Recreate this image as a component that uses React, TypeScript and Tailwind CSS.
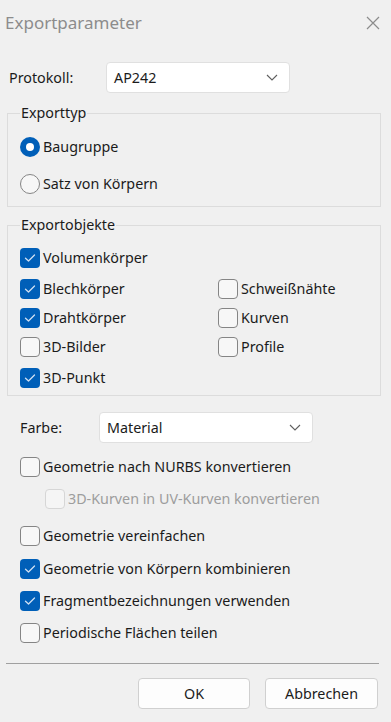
import React from 'react'

const font = { fontFamily: '"Noto Sans", "Open Sans", sans-serif' }

const Check = ({ checked, disabled }: { checked?: boolean; disabled?: boolean }) => (
  checked ? (
    <span className='flex items-center justify-center w-[20px] h-[20px] rounded-[4px] bg-[#005fb8] shrink-0'>
      <svg width='12' height='10' viewBox='0 0 12 10' fill='none'>
        <path d='M1.5 5.2 L4.5 8 L10.5 2' stroke='#cfe0f3' strokeWidth='1.3' strokeLinecap='round' strokeLinejoin='round' />
      </svg>
    </span>
  ) : (
    <span className={disabled
      ? 'w-[20px] h-[20px] rounded-[4px] border border-[#d6d6d6] bg-[#f5f5f5] shrink-0'
      : 'w-[20px] h-[20px] rounded-[4px] border border-[#858585] bg-[#f7f7f7] shrink-0'} />
  )
)

const Row = ({ label, checked, disabled, className }: { label: string; checked?: boolean; disabled?: boolean; className?: string }) => (
  <div className={'flex items-center gap-[3px] ' + (className ?? '')}>
    <Check checked={checked} disabled={disabled} />
    <span className={disabled ? 'text-[#9d9d9d]' : 'text-[#1b1b1b]'}>{label}</span>
  </div>
)

const Radio = ({ label, checked }: { label: string; checked?: boolean }) => (
  <div className='flex items-center gap-[3px] h-[26px]'>
    {checked ? (
      <span className='flex items-center justify-center w-[20px] h-[20px] rounded-full bg-[#005fb8]'>
        <span className='w-[8px] h-[8px] rounded-full bg-white' />
      </span>
    ) : (
      <span className='w-[20px] h-[20px] rounded-full border border-[#858585] bg-[#f7f7f7]' />
    )}
    <span className='text-[#1b1b1b]'>{label}</span>
  </div>
)

const Chevron = () => (
  <svg width='12' height='7' viewBox='0 0 12 7' fill='none'>
    <path d='M1 1 L6 6 L11 1' stroke='#5f5f5f' strokeWidth='1.1' />
  </svg>
)

const Select = ({ value, className }: { value: string; className: string }) => (
  <div className={'flex items-center justify-between h-[31px] bg-white border border-[#e0e0e0] rounded-[4px] pl-[7px] pr-[11px] ' + className}>
    <span className='text-[#1b1b1b]'>{value}</span>
    <Chevron />
  </div>
)

export default function App() {
  return (
    <div style={font} className='w-[391px] h-[722px] bg-[#f0f0f0] flex flex-col text-[14.3px] leading-[20px] overflow-hidden'>
      <div className='h-[45px] flex items-center justify-between pl-[5px] pr-[10px]'>
        <span className='text-[17px] text-[#8c8c8c]'>Exportparameter</span>
        <svg width='16' height='16' viewBox='0 0 16 16' fill='none'>
          <path d='M2 2 L14 14 M14 2 L2 14' stroke='#8c8c8c' strokeWidth='1.2' />
        </svg>
      </div>

      <div className='flex items-center mt-[17px] pl-[9px]'>
        <span className='w-[97px] text-[#1b1b1b]'>Protokoll:</span>
        <Select value='AP242' className='w-[184px]' />
      </div>

      <fieldset className='ml-[7px] w-[374px] mt-[10px] border border-[#dcdcdc] px-[12px] pb-[9px] h-[104px]'>
        <legend className='px-[1px] text-[#1b1b1b]'>Exporttyp</legend>
        <div className='flex flex-col gap-[11px] mt-[11px]'>
          <Radio label='Baugruppe' checked />
          <Radio label='Satz von Körpern' />
        </div>
      </fieldset>

      <fieldset className='ml-[7px] w-[374px] mt-[8px] border border-[#dcdcdc] px-[12px] h-[181px]'>
        <legend className='px-[1px] text-[#1b1b1b]'>Exportobjekte</legend>
        <div className='flex flex-col mt-[10px]'>
          <Row label='Volumenkörper' checked className='h-[26px]' />
          <div className='grid grid-cols-[198px_1fr] mt-[5px] gap-y-[3px]'>
            <Row label='Blechkörper' checked className='h-[26px]' />
            <Row label='Schweißnähte' className='h-[26px]' />
            <Row label='Drahtkörper' checked className='h-[26px]' />
            <Row label='Kurven' className='h-[26px]' />
            <Row label='3D-Bilder' className='h-[26px]' />
            <Row label='Profile' className='h-[26px]' />
          </div>
          <Row label='3D-Punkt' checked className='h-[26px] mt-[5px]' />
        </div>
      </fieldset>

      <div className='flex items-center mt-[16px] pl-[20px]'>
        <span className='w-[79px] text-[#1b1b1b]'>Farbe:</span>
        <Select value='Material' className='w-[214px]' />
      </div>

      <div className='flex flex-col pl-[20px]'>
        <Row label='Geometrie nach NURBS konvertieren' className='h-[26px] mt-[11px]' />
        <Row label='3D-Kurven in UV-Kurven konvertieren' disabled className='h-[26px] mt-[6px] ml-[25px]' />
        <Row label='Geometrie vereinfachen' className='h-[26px] mt-[11px]' />
        <Row label='Geometrie von Körpern kombinieren' checked className='h-[26px] mt-[7px]' />
        <Row label='Fragmentbezeichnungen verwenden' checked className='h-[26px] mt-[6px]' />
        <Row label='Periodische Flächen teilen' className='h-[26px] mt-[6px]' />
      </div>

      <div className='ml-[6px] w-[373px] h-[1px] bg-[#a0a0a0] mt-[17px]' />

      <div className='flex justify-end gap-[15px] mt-[14px] pr-[13px]'>
        <button className='w-[112px] h-[31px] bg-[#fdfdfd] border border-[#d0d0d0] rounded-[4px] text-[#1b1b1b]'>OK</button>
        <button className='w-[113px] h-[31px] bg-[#fdfdfd] border border-[#d0d0d0] rounded-[4px] text-[#1b1b1b]'>Abbrechen</button>
      </div>
    </div>
  )
}
